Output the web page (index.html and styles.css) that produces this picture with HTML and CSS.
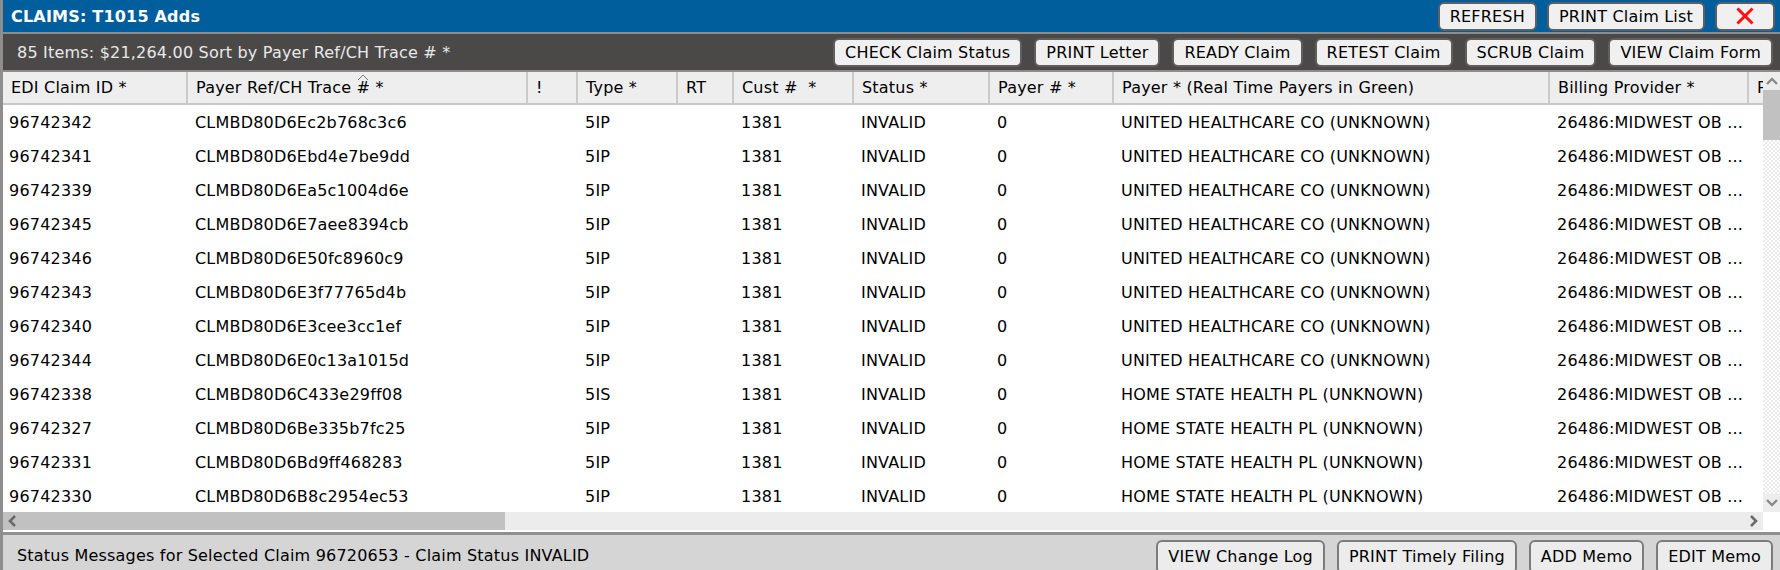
FILE: index.html
```html
<!DOCTYPE html>
<html>
<head>
<meta charset="utf-8">
<title>CLAIMS: T1015 Adds</title>
<link rel="stylesheet" href="styles.css">
</head>
<body>
<div class="window">
  <header class="titlebar">
    <h1 class="title">CLAIMS: T1015 Adds</h1>
    <div class="actions">
      <button class="btn">REFRESH</button>
      <button class="btn">PRINT Claim List</button>
      <button class="btn btn-close" aria-label="Close"><svg width="18" height="18" viewBox="0 0 18 18"><path d="M2.5 2.5 L15.5 15.5 M15.5 2.5 L2.5 15.5" stroke="#ff1010" stroke-width="3" stroke-linecap="square"/></svg></button>
    </div>
  </header>
  <div class="toolbar">
    <span class="summary">85 Items: $21,264.00 Sort by Payer Ref/CH Trace # *</span>
    <div class="actions">
      <button class="btn">CHECK Claim Status</button>
      <button class="btn">PRINT Letter</button>
      <button class="btn">READY Claim</button>
      <button class="btn">RETEST Claim</button>
      <button class="btn">SCRUB Claim</button>
      <button class="btn">VIEW Claim Form</button>
    </div>
  </div>
  <div class="grid-wrap">
    <div class="table">
      <div class="row head">
        <div class="th">EDI Claim ID *</div>
        <div class="th">Payer Ref/CH Trace <span class="sortmark">#<svg class="caret" width="12" height="7" viewBox="0 0 12 7"><polyline points="1,6 6,1 11,6" fill="none" stroke="#777" stroke-width="1"/></svg></span> *</div>
        <div class="th">!</div>
        <div class="th">Type *</div>
        <div class="th">RT</div>
        <div class="th">Cust # &nbsp;*</div>
        <div class="th">Status *</div>
        <div class="th">Payer # *</div>
        <div class="th">Payer * (Real Time Payers in Green)</div>
        <div class="th">Billing Provider *</div>
        <div class="th">Pay To Provider *</div>
      </div>
      <div class="row"><div class="td">96742342</div><div class="td">CLMBD80D6Ec2b768c3c6</div><div class="td"></div><div class="td">5IP</div><div class="td"></div><div class="td">1381</div><div class="td">INVALID</div><div class="td">0</div><div class="td">UNITED HEALTHCARE CO (UNKNOWN)</div><div class="td">26486:MIDWEST OB ...</div><div class="td"></div></div>
      <div class="row"><div class="td">96742341</div><div class="td">CLMBD80D6Ebd4e7be9dd</div><div class="td"></div><div class="td">5IP</div><div class="td"></div><div class="td">1381</div><div class="td">INVALID</div><div class="td">0</div><div class="td">UNITED HEALTHCARE CO (UNKNOWN)</div><div class="td">26486:MIDWEST OB ...</div><div class="td"></div></div>
      <div class="row"><div class="td">96742339</div><div class="td">CLMBD80D6Ea5c1004d6e</div><div class="td"></div><div class="td">5IP</div><div class="td"></div><div class="td">1381</div><div class="td">INVALID</div><div class="td">0</div><div class="td">UNITED HEALTHCARE CO (UNKNOWN)</div><div class="td">26486:MIDWEST OB ...</div><div class="td"></div></div>
      <div class="row"><div class="td">96742345</div><div class="td">CLMBD80D6E7aee8394cb</div><div class="td"></div><div class="td">5IP</div><div class="td"></div><div class="td">1381</div><div class="td">INVALID</div><div class="td">0</div><div class="td">UNITED HEALTHCARE CO (UNKNOWN)</div><div class="td">26486:MIDWEST OB ...</div><div class="td"></div></div>
      <div class="row"><div class="td">96742346</div><div class="td">CLMBD80D6E50fc8960c9</div><div class="td"></div><div class="td">5IP</div><div class="td"></div><div class="td">1381</div><div class="td">INVALID</div><div class="td">0</div><div class="td">UNITED HEALTHCARE CO (UNKNOWN)</div><div class="td">26486:MIDWEST OB ...</div><div class="td"></div></div>
      <div class="row"><div class="td">96742343</div><div class="td">CLMBD80D6E3f77765d4b</div><div class="td"></div><div class="td">5IP</div><div class="td"></div><div class="td">1381</div><div class="td">INVALID</div><div class="td">0</div><div class="td">UNITED HEALTHCARE CO (UNKNOWN)</div><div class="td">26486:MIDWEST OB ...</div><div class="td"></div></div>
      <div class="row"><div class="td">96742340</div><div class="td">CLMBD80D6E3cee3cc1ef</div><div class="td"></div><div class="td">5IP</div><div class="td"></div><div class="td">1381</div><div class="td">INVALID</div><div class="td">0</div><div class="td">UNITED HEALTHCARE CO (UNKNOWN)</div><div class="td">26486:MIDWEST OB ...</div><div class="td"></div></div>
      <div class="row"><div class="td">96742344</div><div class="td">CLMBD80D6E0c13a1015d</div><div class="td"></div><div class="td">5IP</div><div class="td"></div><div class="td">1381</div><div class="td">INVALID</div><div class="td">0</div><div class="td">UNITED HEALTHCARE CO (UNKNOWN)</div><div class="td">26486:MIDWEST OB ...</div><div class="td"></div></div>
      <div class="row"><div class="td">96742338</div><div class="td">CLMBD80D6C433e29ff08</div><div class="td"></div><div class="td">5IS</div><div class="td"></div><div class="td">1381</div><div class="td">INVALID</div><div class="td">0</div><div class="td">HOME STATE HEALTH PL (UNKNOWN)</div><div class="td">26486:MIDWEST OB ...</div><div class="td"></div></div>
      <div class="row"><div class="td">96742327</div><div class="td">CLMBD80D6Be335b7fc25</div><div class="td"></div><div class="td">5IP</div><div class="td"></div><div class="td">1381</div><div class="td">INVALID</div><div class="td">0</div><div class="td">HOME STATE HEALTH PL (UNKNOWN)</div><div class="td">26486:MIDWEST OB ...</div><div class="td"></div></div>
      <div class="row"><div class="td">96742331</div><div class="td">CLMBD80D6Bd9ff468283</div><div class="td"></div><div class="td">5IP</div><div class="td"></div><div class="td">1381</div><div class="td">INVALID</div><div class="td">0</div><div class="td">HOME STATE HEALTH PL (UNKNOWN)</div><div class="td">26486:MIDWEST OB ...</div><div class="td"></div></div>
      <div class="row"><div class="td">96742330</div><div class="td">CLMBD80D6B8c2954ec53</div><div class="td"></div><div class="td">5IP</div><div class="td"></div><div class="td">1381</div><div class="td">INVALID</div><div class="td">0</div><div class="td">HOME STATE HEALTH PL (UNKNOWN)</div><div class="td">26486:MIDWEST OB ...</div><div class="td"></div></div>
    </div>
    <div class="vscroll">
      <div class="arrow"><svg width="14" height="10" viewBox="0 0 14 10"><polyline points="2,8 7,3 12,8" fill="none" stroke="#8a8a8a" stroke-width="2.4"/></svg></div>
      <div class="vthumb"></div>
      <div class="vtrack"></div>
      <div class="arrow"><svg width="14" height="10" viewBox="0 0 14 10"><polyline points="2,2 7,7 12,2" fill="none" stroke="#8a8a8a" stroke-width="2.4"/></svg></div>
    </div>
  </div>
  <div class="hscroll-row">
    <div class="hscroll">
      <div class="harrow"><svg width="10" height="14" viewBox="0 0 10 14"><polyline points="8,2 3,7 8,12" fill="none" stroke="#6a6a6a" stroke-width="2.6"/></svg></div>
      <div class="hthumb"></div>
      <div class="htrack"></div>
      <div class="harrow"><svg width="10" height="14" viewBox="0 0 10 14"><polyline points="2,2 7,7 2,12" fill="none" stroke="#6a6a6a" stroke-width="2.6"/></svg></div>
    </div>
    <div class="corner"></div>
  </div>
  <footer class="statusbar">
    <span class="status-text">Status Messages for Selected Claim 96720653 - Claim Status INVALID</span>
    <div class="actions">
      <button class="btn btn-status">VIEW Change Log</button>
      <button class="btn btn-status">PRINT Timely Filing</button>
      <button class="btn btn-status">ADD Memo</button>
      <button class="btn btn-status">EDIT Memo</button>
    </div>
  </footer>
</div>
</body>
</html>
```
FILE: styles.css
```css
* { box-sizing: border-box; }
html, body { margin: 0; padding: 0; }
body {
  width: 1780px;
  height: 570px;
  overflow: hidden;
  background: #ffffff;
  font-family: "DejaVu Sans", Verdana, sans-serif;
  font-size: 16px;
  letter-spacing: 0.2px;
  color: #000;
}
.window {
  height: 570px;
  display: flex;
  flex-direction: column;
  border-left: 3px solid #8e8e8e;
}
.window > * { flex-shrink: 0; }
.actions {
  display: flex;
  gap: 12px;
  align-items: center;
}
.btn {
  font: inherit;
  font-size: 16px;
  letter-spacing: 0.2px;
  color: #000;
  height: 29px;
  padding: 0 10px;
  background: #f0f0f0;
  border: 2px solid #5f5f5f;
  border-radius: 6px;
  line-height: 25px;
  white-space: nowrap;
}
.titlebar {
  height: 34px;
  background: #005e9c;
  border-bottom: 2px solid #8c8c8c;
  display: flex;
  justify-content: space-between;
  align-items: center;
  padding: 0 5px 0 8px;
}
.title {
  margin: 0;
  font-size: 16px;
  font-weight: bold;
  color: #ffffff;
}
.titlebar .actions { gap: 10px; }
.btn-close {
  width: 60px;
  display: flex;
  align-items: center;
  justify-content: center;
}
.toolbar {
  height: 38px;
  background: #4b4948;
  border-bottom: 2px solid #8c8c8c;
  display: flex;
  justify-content: space-between;
  align-items: center;
  padding: 0 7px 0 14px;
}
.summary { color: #e8e8e8; }
.grid-wrap {
  height: 440px;
  display: flex;
  overflow: hidden;
}
.table {
  flex: 1;
  overflow: hidden;
  --cols: 185px 340px 50px 100px 56px 120px 136px 124px 436px 199px 200px;
}
.row {
  display: grid;
  grid-template-columns: var(--cols);
  width: max-content;
  height: 34px;
  align-items: center;
}
.row.head {
  height: 33px;
  background: #eeeeee;
  border-bottom: 2px solid #c8c8c8;
  align-items: stretch;
}
.th {
  padding-left: 8px;
  line-height: 31px;
  border-right: 2px solid #cacaca;
  white-space: nowrap;
  overflow: hidden;
}
.sortmark { position: relative; }
.caret {
  position: absolute;
  left: 50%;
  margin-left: -6px;
  top: -4px;
}
.td {
  padding-left: 7px;
  white-space: nowrap;
  overflow: hidden;
}
.row .td:first-child { padding-left: 6px; }
.vscroll {
  width: 17px;
  display: flex;
  flex-direction: column;
  background: #ededed;
}
.arrow {
  height: 18px;
  display: flex;
  align-items: center;
  justify-content: center;
  background: #ededed;
}
.vthumb {
  height: 50px;
  background: #c1c1c1;
}
.vtrack {
  flex: 1;
  background: repeating-conic-gradient(#ffffff 0 25%, #e9e9e9 0 50%) 0 0 / 4px 4px;
}
.hscroll-row {
  height: 20px;
  display: flex;
  background: #ffffff;
}
.hscroll {
  flex: 1;
  height: 18px;
  display: flex;
  background: #ececec;
}
.harrow {
  width: 18px;
  display: flex;
  align-items: center;
  justify-content: center;
}
.hthumb {
  width: 484px;
  background: #c1c1c1;
}
.htrack { flex: 1; }
.harrow:first-child { background: #c1c1c1; }
.corner { width: 17px; background: #ffffff; }
.statusbar {
  flex: 1 1 auto;
  min-height: 0;
  overflow: hidden;
  background: #d5d5d5;
  border-top: 3px solid #909090;
  display: flex;
  justify-content: space-between;
  align-items: flex-start;
  padding: 5px 7px 0 14px;
}
.status-text { line-height: 32px; }
.btn-status {
  height: 34px;
  flex-shrink: 0;
  background: #ececec;
  border-color: #7c7c7c;
  line-height: 30px;
}
```
